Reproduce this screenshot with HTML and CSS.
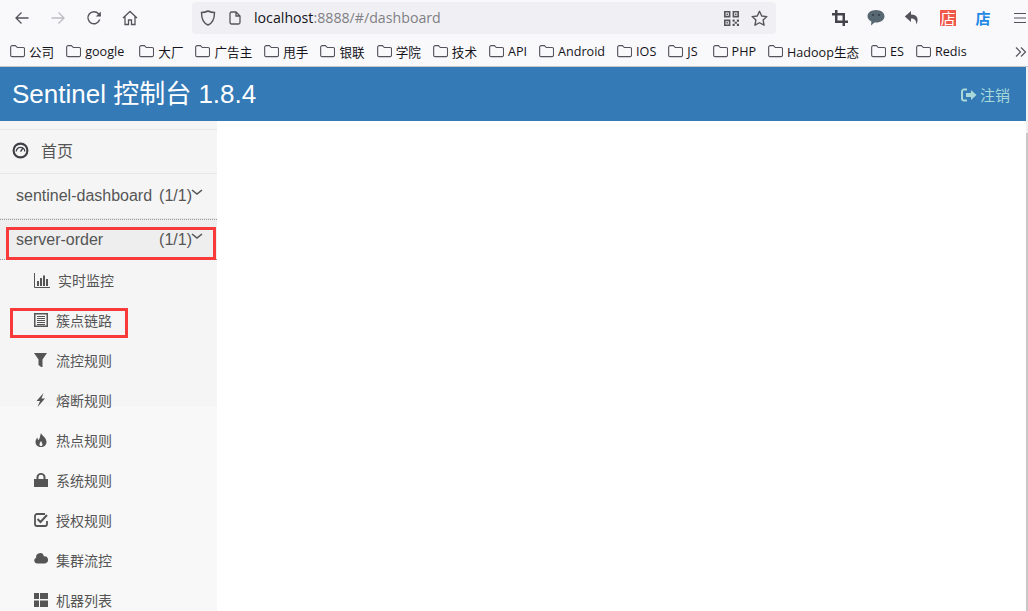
FILE: index.html
```html
<!DOCTYPE html>
<html lang="zh">
<head>
<meta charset="utf-8">
<title>Sentinel</title>
<link rel="stylesheet" href="styles.css">
</head>
<body>
<svg class="defs" width="0" height="0" aria-hidden="true">
  <symbol id="folder" viewBox="0 0 16 14"><path d="M.7 3A1.700 1.700 0 0 1 2.400 1.300h3.400l2 2h6.200a1.500 1.500 0 0 1 1.500 1.500v6.700a1.500 1.500 0 0 1-1.500 1.500H2.200a1.500 1.500 0 0 1-1.500-1.500V3z" fill="none" stroke="#55545c" stroke-width="1.200"/></symbol>
</svg>
<div class="browser">
  <div class="toolbar">
    <div class="nav">
      <svg class="tool" viewBox="0 0 16 16"><path d="M14.500 8H2M7.500 2.500 2 8l5.500 5.500" fill="none" stroke="#55545c" stroke-width="1.300"/></svg>
      <svg class="tool" viewBox="0 0 16 16"><path d="M1.500 8H14M8.500 2.500 14 8l-5.500 5.500" fill="none" stroke="#bdbcc2" stroke-width="1.300"/></svg>
      <svg class="tool" viewBox="0 0 16 16"><path d="M13.700 9.500A6 6 0 1 1 12.500 3.800L14.500 6" fill="none" stroke="#55545c" stroke-width="1.400"/><path d="M14.800 1.500v5h-5z" fill="#55545c"/></svg>
      <svg class="tool" viewBox="0 0 16 16"><path d="M1 8 8 1.500 15 8M3 6.500V14.500h3.500v-4.500h3v4.500H13V6.500" fill="none" stroke="#55545c" stroke-width="1.300"/></svg>
    </div>
    <div class="urlbar">
      <svg class="shield" viewBox="0 0 16 16"><path d="M8 1c2 1 4 1.500 6.500 1.500C14.500 9 12 13.500 8 15 4 13.500 1.500 9 1.500 2.500 4 2.500 6 2 8 1z" fill="none" stroke="#55545c" stroke-width="1.400"/></svg>
      <svg class="page" viewBox="0 0 12 14"><path d="M1 2.500A1.500 1.500 0 0 1 2.500 1H7l4 4v6.500a1.500 1.500 0 0 1-1.500 1.500h-7A1.500 1.500 0 0 1 1 11.500zM7 1v4h4" fill="none" stroke="#55545c" stroke-width="1.300"/></svg>
      <span class="url"><span class="host">localhost</span>:8888/#/dashboard</span>
      <span class="url-actions">
        <svg class="qr" viewBox="0 0 14 14"><path d="M0 0h6v6H0zM1.500 1.500v3h3v-3zM8 0h6v6H8zM9.500 1.500v3h3v-3zM0 8h6v6H0zM1.500 9.500v3h3v-3zM2.300 2.300h1.400v1.400H2.300zM10.300 2.300h1.400v1.400h-1.400zM2.300 10.300h1.400v1.400H2.300zM8 8h2v2H8zM10 10h2v2h-2zM12 8h2v2h-2zM8 12h2v2H8zM12 12h2v2h-2z" fill="#55545c" fill-rule="evenodd"/></svg>
        <svg class="star" viewBox="0 0 16 16"><path d="m8 1.200 2.100 4.400 4.800.6-3.500 3.300.9 4.800L8 12l-4.300 2.300.9-4.800L1.100 6.200l4.800-.6z" fill="none" stroke="#55545c" stroke-width="1.300" stroke-linejoin="round"/></svg>
      </span>
    </div>
    <div class="extensions">
      <svg class="ext" viewBox="0 0 16 16"><path d="M3 0h2.500v3H13v7.500h3V13h-3v3h-2.500v-3H3V5.500H0V3h3zM5.500 5.500v5h5v-5z" fill="#45444c" fill-rule="evenodd"/></svg>
      <svg class="ext ext-wide" viewBox="0 0 18 16"><path d="M9 0c5 0 8.500 2.800 8.500 6.300S14 12.600 9 12.600c-.5 0-1 0-1.500-.1L4 15.500l.4-4C2 10.400.5 8.500.5 6.300.5 2.800 4 0 9 0z" fill="#586873"/><circle cx="6" cy="5" r="1" fill="#2e3a42"/><circle cx="12" cy="5" r="1" fill="#2e3a42"/></svg>
      <svg class="ext" viewBox="0 0 16 16"><path d="M7 1 .8 6.500 7 12V8.500c3.500 0 5 1.200 5.500 6 2.500-5.500 1-10-5.500-10z" fill="#55545c"/></svg>
      <span class="shop shop-red">店</span>
      <span class="shop shop-blue">店</span>
      <svg class="menu" viewBox="0 0 14 12"><path d="M1 1.500h12M1 6h12M1 10.500h12" stroke="#55545c" stroke-width="1.200"/></svg>
    </div>
  </div>
  <div class="bookmarks">
    <span class="bm"><svg class="folder"><use href="#folder"/></svg>公司</span>
    <span class="bm bm-wide"><svg class="folder"><use href="#folder"/></svg>google</span>
    <span class="bm"><svg class="folder"><use href="#folder"/></svg>大厂</span>
    <span class="bm"><svg class="folder"><use href="#folder"/></svg>广告主</span>
    <span class="bm"><svg class="folder"><use href="#folder"/></svg>甩手</span>
    <span class="bm"><svg class="folder"><use href="#folder"/></svg>银联</span>
    <span class="bm"><svg class="folder"><use href="#folder"/></svg>学院</span>
    <span class="bm"><svg class="folder"><use href="#folder"/></svg>技术</span>
    <span class="bm"><svg class="folder"><use href="#folder"/></svg>API</span>
    <span class="bm"><svg class="folder"><use href="#folder"/></svg>Android</span>
    <span class="bm"><svg class="folder"><use href="#folder"/></svg>IOS</span>
    <span class="bm bm-wide"><svg class="folder"><use href="#folder"/></svg>JS</span>
    <span class="bm"><svg class="folder"><use href="#folder"/></svg>PHP</span>
    <span class="bm"><svg class="folder"><use href="#folder"/></svg>Hadoop生态</span>
    <span class="bm"><svg class="folder"><use href="#folder"/></svg>ES</span>
    <span class="bm"><svg class="folder"><use href="#folder"/></svg>Redis</span>
    <svg class="more" viewBox="0 0 12 12"><path d="M1 1.500 5.500 6 1 10.500M6 1.500 10.500 6 6 10.500" fill="none" stroke="#55545c" stroke-width="1.200"/></svg>
  </div>
</div>
<div class="viewport">
  <div class="app">
    <header class="app-header">
      <span class="brand">Sentinel 控制台 1.8.4</span>
      <span class="logout">
        <svg class="logout-icon" viewBox="0 0 16 14"><path d="M6 1.500H3A2 2 0 0 0 1 3.500v7a2 2 0 0 0 2 2h3" fill="none" stroke="#a8d8d8" stroke-width="2"/><path d="M5 5h5V2l5.500 5L10 12V9H5z" fill="#a8d8d8"/></svg>
        注销
      </span>
    </header>
    <div class="content">
      <aside class="sidebar">
        <div class="home">
          <svg class="home-icon" viewBox="0 0 16 16"><circle cx="8" cy="8" r="6.500" fill="none" stroke="#3f4046" stroke-width="2"/><path d="M4 9a4 4 0 0 1 8 0" fill="none" stroke="#3f4046" stroke-width="1.200"/><path d="M8 9l2.500-3.500" stroke="#3f4046" stroke-width="1.400"/></svg>
          <span>首页</span>
        </div>
        <div class="app-row app-first">
          <span class="app-name">sentinel-dashboard</span>
          <span class="app-count">(1/1)</span>
          <svg class="chev" viewBox="0 0 12 7"><path d="M1 1l5 4 5-4" fill="none" stroke="#555" stroke-width="1.600"/></svg>
        </div>
        <div class="app-row app-active">
          <span class="app-name">server-order</span>
          <span class="app-count">(1/1)</span>
          <svg class="chev" viewBox="0 0 12 7"><path d="M1 1l5 4 5-4" fill="none" stroke="#555" stroke-width="1.600"/></svg>
          <span class="mark mark-app"></span>
        </div>
        <nav class="menu-list">
          <div class="item item-wide">
            <svg class="icon" viewBox="0 0 16 16"><path d="M.5 1v14.500H16" fill="none" stroke="#555" stroke-width="1"/><path d="M3 9h2v5H3zM6 6h2v8H6zM9 3.500h2V14H9zM12 7h2v7h-2z" fill="#555"/></svg>
            <span>实时监控</span>
          </div>
          <div class="item">
            <svg class="icon" viewBox="0 0 14 14"><path d="M.75.75h12.500v12.500H.75z" fill="none" stroke="#555" stroke-width="1.500"/><path d="M3 3.500h8M3 5.500h8M3 7.500h8M3 9.500h8M3 11.500h8" stroke="#555" stroke-width="1"/></svg>
            <span>簇点链路</span>
            <span class="mark mark-item"></span>
          </div>
          <div class="item">
            <svg class="icon" viewBox="0 0 14 14"><path d="M0 0h13L8.500 6.500V15L4.500 12V6.500z" fill="#555"/></svg>
            <span>流控规则</span>
          </div>
          <div class="item">
            <svg class="icon" viewBox="0 0 14 14"><path d="M9.500 0 2.500 8H6L3.500 14 11 5.500H7.500z" fill="#555"/></svg>
            <span>熔断规则</span>
          </div>
          <div class="item">
            <svg class="icon" viewBox="0 0 14 14"><path d="M7 0c.500 2.500 5.500 4.500 5.500 9 0 3-2.500 5-5.500 5S1.500 12 1.500 9c0-2 1-3.500 2-4.500 0 1.500.5 2.500 1 2.500C6 6 6 2.500 7 0zM7 8c-.500 1-1.500 2-1.500 3.500S6.500 13 7 13s1.500-.5 1.500-1.500S7.500 9 7 8z" fill="#555" fill-rule="evenodd"/></svg>
            <span>热点规则</span>
          </div>
          <div class="item">
            <svg class="icon" viewBox="0 0 14 14"><path d="M0 6h2.500V4a4.500 4 0 0 1 9 0v2H14v8H0zM4.500 6h5V4a2.500 2.200 0 0 0-5 0z" fill="#555" fill-rule="evenodd"/></svg>
            <span>系统规则</span>
          </div>
          <div class="item">
            <svg class="icon" viewBox="0 0 14 14"><path d="M11 1H3a2 2 0 0 0-2 2v8a2 2 0 0 0 2 2h8a2 2 0 0 0 2-2V8" fill="none" stroke="#555" stroke-width="1.800"/><path d="m3.500 6 3 3 6.500-7" fill="none" stroke="#555" stroke-width="2"/></svg>
            <span>授权规则</span>
          </div>
          <div class="item">
            <svg class="icon" viewBox="0 0 14 14"><path d="M3 10.500a3 3 0 0 1-.800-5.800A3.800 3.800 0 0 1 9.800 3.300 3.500 3.500 0 0 1 11 10.500z" fill="#555"/></svg>
            <span>集群流控</span>
          </div>
          <div class="item">
            <svg class="icon" viewBox="0 0 14 14"><path d="M0 0h5v6H0zM6 0h8v6H6zM0 7.500h5V14H0zM6 7.500h8V14H6z" fill="#555"/></svg>
            <span>机器列表</span>
          </div>
        </nav>
      </aside>
      <main class="main"></main>
    </div>
  </div>
  <div class="scrollbar"><div class="thumb"></div></div>
</div>
</body>
</html>
```
FILE: styles.css
```css
* { box-sizing: border-box; }
html, body { margin: 0; height: 100%; overflow: hidden; }
body {
  width: 1028px;
  height: 611px;
  display: flex;
  flex-direction: column;
  background: #fff;
  font-family: "Liberation Sans", "Noto Sans CJK SC", sans-serif;
  color: #555;
}
.defs { position: absolute; }

.browser { background: #f9f9fb; height: 67px; flex: none; border-bottom: 1px solid #c8c8cc; }
.toolbar { height: 36px; display: flex; align-items: center; }
.nav { display: flex; align-items: center; gap: 20px; padding-left: 14px; width: 192px; flex: none; }
.tool { width: 16px; height: 16px; flex: none; }
.urlbar {
  width: 584px; height: 32px; flex: none; background: #f0f0f4; border-radius: 4px;
  display: flex; align-items: center; padding-left: 8px;
}
.shield { width: 16px; height: 16px; }
.page { width: 12px; height: 14px; margin-left: 13px; }
.url { margin-left: 13px; margin-top: -2px; font-size: 14.2px; color: #808085; font-family: "Open Sans", "Liberation Sans", sans-serif; }
.host { color: #15141a; }
.url-actions { margin-left: auto; display: flex; align-items: center; gap: 12px; padding-right: 8px; }
.qr { width: 15px; height: 15px; }
.star { width: 17px; height: 17px; }
.extensions { flex: 1; display: grid; grid-template-columns: repeat(6, 36px); justify-items: center; align-items: center; padding-left: 46px; }
.ext { width: 16px; height: 16px; }
.ext-wide { width: 18px; }
.shop {
  width: 16px; height: 20px; font-size: 15px; line-height: 20px; text-align: center; color: #fff;
  font-family: "Noto Sans CJK SC", sans-serif;
}
.shop-red { color: #fff; background: linear-gradient(#f9f9fb 2px, #f0584a 2px, #f0584a 18px, #f9f9fb 18px); }
.shop-blue { color: #1e88e5; font-weight: 700; margin-left: -2px; }
.menu { width: 14px; height: 12px; }

.bookmarks { height: 30px; display: flex; align-items: center; padding-left: 10px; position: relative; }
.bm {
  display: inline-flex; align-items: center; gap: 4px; font-size: 12.6px; color: #15141a; margin-right: 12px; flex: none;
  font-family: "Open Sans", "Noto Sans CJK SC", sans-serif; white-space: nowrap;
}
.bm-wide { margin-right: 15px; }
.folder { width: 15px; height: 14px; flex: none; }
.more { position: absolute; right: 1px; top: 10px; width: 12px; height: 12px; }

.viewport { flex: 1; display: flex; min-height: 0; }
.app { flex: 1; display: flex; flex-direction: column; min-width: 0; }
.scrollbar { width: 2px; flex: none; background: #f0f0f0; padding-top: 66px; display: flex; }
.thumb { flex: 1; background: #c8c8c8; }

.app-header {
  height: 54px; flex: none; background: #337ab7;
  display: flex; align-items: center; justify-content: space-between; padding: 0 16px 4px 12px;
}
.brand { font-size: 26px; color: #fff; margin-top: -1px; }
.logout { font-size: 15px; color: #a8d8d8; display: flex; align-items: center; gap: 3px; margin-top: 5px; }
.logout-icon { width: 16px; height: 14px; }

.content { flex: 1; display: flex; min-height: 0; }
.sidebar { width: 217px; flex: none; background: linear-gradient(#f5f5f5 285px, #f8f8f8 285px); overflow: hidden; padding-top: 8px; }
.main { flex: 1; background: #fff; }

.home {
  height: 45px; display: flex; align-items: center; gap: 12px; padding: 0 0 4px 12px; font-size: 16px;
  border-top: 1px solid #e7e7e7; border-bottom: 1px solid #e7e7e7; color: #555;
}
.home-icon { width: 17px; height: 17px; margin-top: 2px; }
.app-row { display: flex; position: relative; padding: 0 0 0 16px; font-size: 16px; color: #555; }
.app-first { height: 45px; padding-top: 13px; border-bottom: 1px solid #e7e7e7; }
.app-active { height: 41px; padding-top: 11px; background: #eee; border-top: 1px dotted #999; border-bottom: 1px dotted #999; }
.app-name { flex: 1; }
.chev { width: 12px; height: 7px; margin: 2px 14px 0 -1px; flex: none; }

.mark { position: absolute; border: 3px solid #f93a3a; pointer-events: none; }
.mark-app { left: 6px; top: 7px; width: 210px; height: 33px; }
.mark-item { left: 10px; top: 8px; width: 118px; height: 30px; }

.menu-list { display: flex; flex-direction: column; }
.item { height: 40px; position: relative; display: flex; align-items: center; padding-left: 34px; font-size: 14px; color: #555; flex: none; }
.icon { width: 14px; height: 14px; margin-right: 8px; margin-top: -1px; flex: none; }
.item-wide .icon { width: 16px; height: 16px; }
```
